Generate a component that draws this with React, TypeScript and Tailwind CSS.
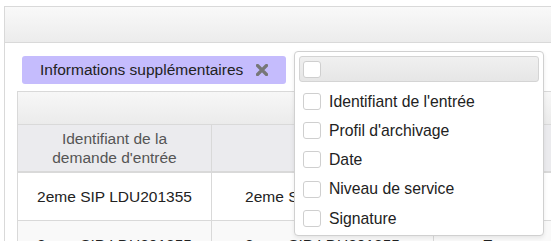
const options = [
  "Identifiant de l'entrée",
  "Profil d'archivage",
  "Date",
  "Niveau de service",
  "Signature",
]

function Box() {
  return <span className="block h-[17px] w-[18px] shrink-0 rounded-[3px] border border-[#cfcfcf] bg-white" />
}

function Cross() {
  return (
    <svg width="12" height="12" viewBox="0 0 12 12" className="ml-[13px] shrink-0">
      <path d="M1.5 1.5 L10.5 10.5 M10.5 1.5 L1.5 10.5" stroke="#777" strokeWidth="3.2" strokeLinecap="round" />
    </svg>
  )
}

export default function App() {
  return (
    <div className="relative h-[241px] w-[551px] overflow-hidden bg-white text-[15.5px] text-[#222] [font-family:'Liberation_Sans',Arial,sans-serif]">
      {/* panel */}
      <div className="ml-[4px] mt-[6px] border-l border-t border-[#d9d9d9]">
        <div className="h-[36px] border-b border-[#d9d9d9] bg-gradient-to-b from-[#f9f9f9] to-[#ececec]" />
        <div className="pl-[12px] pt-[13px]">
          <div className="ml-[5px] flex h-[28px] w-[264px] items-center rounded-[3px] bg-[#c5bcfd] pl-[18px]">
            <span className="whitespace-nowrap">Informations supplémentaires</span>
            <Cross />
          </div>

          <div className="mt-[7px] w-[600px] border-l border-t border-[#d9d9d9]">
            <div className="h-[33px] border-b border-[#d9d9d9] bg-gradient-to-b from-[#f7f7f7] to-[#ebebeb]" />
            <div className="grid grid-cols-[194px_222px_140px]">
              <div className="flex h-[48px] items-center justify-center border-b-2 border-r border-[#d9d9d9] bg-[#ebebee] text-center leading-[19px] text-[#555]">
                Identifiant de la
                <br />
                demande d'entrée
              </div>
              <div className="h-[48px] border-b-2 border-r border-[#d9d9d9] bg-[#ebebee]" />
              <div className="h-[48px] border-b-2 border-[#d9d9d9] bg-[#ebebee]" />

              <div className="flex h-[48px] items-center justify-center border-b border-r border-[#d9d9d9]">2eme SIP LDU201355</div>
              <div className="flex h-[48px] items-center justify-center border-b border-r border-[#d9d9d9]">2eme SIP LDU201355</div>
              <div className="flex h-[48px] items-center justify-center border-b border-[#d9d9d9]">Erreur</div>

              <div className="flex h-[48px] items-center justify-center border-r border-[#d9d9d9] bg-[#f9f9f9]">2eme SIP LDU201355</div>
              <div className="flex h-[48px] items-center justify-center border-r border-[#d9d9d9] bg-[#f9f9f9]">2eme SIP LDU201355</div>
              <div className="flex h-[48px] items-center justify-center bg-[#f9f9f9]">Erreur</div>
            </div>
          </div>
        </div>
      </div>

      {/* dropdown */}
      <div className="absolute left-[294px] top-[51px] h-[185px] w-[250px] rounded-[4px] border border-[#d0d0d0] bg-white px-[4px] pt-[4px] shadow-[0_2px_4px_rgba(0,0,0,0.08)]">
        <div className="flex h-[26px] items-center rounded-[3px] border border-[#d4d4d4] bg-gradient-to-b from-[#f0f0f0] to-[#e6e6e6] pl-[3px]">
          <Box />
        </div>
        <ul className="mt-[5px]">
          {options.map((o) => (
            <li key={o} className="flex h-[29.2px] items-center gap-[8px] pl-[4px] text-[15.75px]">
              <Box />
              <span className="whitespace-nowrap">{o}</span>
            </li>
          ))}
        </ul>
      </div>
    </div>
  )
}
